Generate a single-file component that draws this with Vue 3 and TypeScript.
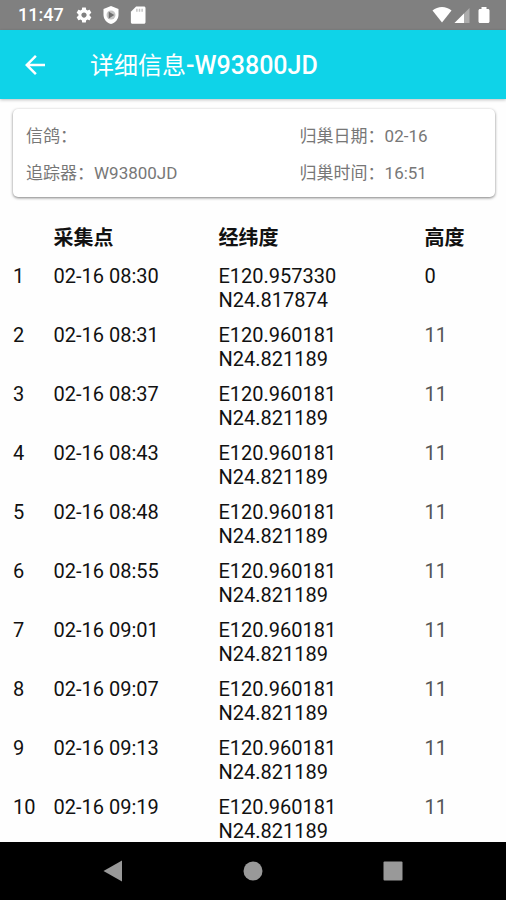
<script setup lang="ts">
interface TrackPoint {
  time: string
  east: string
  north: string
  altitude: number
}

const ringNo = 'W93800JD'

const times: string[] = ['08:31', '08:37', '08:43', '08:48', '08:55', '09:01', '09:07', '09:13', '09:19']

const points: TrackPoint[] = [
  { time: '02-16 08:30', east: 'E120.957330', north: 'N24.817874', altitude: 0 },
  ...times.map((t) => ({ time: `02-16 ${t}`, east: 'E120.960181', north: 'N24.821189', altitude: 11 })),
]
</script>

<template>
  <div class="screen">
    <div class="status">
      <span class="clock">11:47</span>
      <svg class="status-icon" viewBox="0 0 24 24" aria-hidden="true">
        <path fill-rule="evenodd" d="M19.43 12.98c.04-.32.07-.64.07-.98s-.03-.66-.07-.98l2.11-1.65c.19-.15.24-.42.12-.64l-2-3.46c-.12-.22-.39-.3-.61-.22l-2.49 1c-.52-.4-1.08-.73-1.69-.98l-.38-2.65C14.46 2.18 14.25 2 14 2h-4c-.25 0-.46.18-.49.42l-.38 2.65c-.61.25-1.17.59-1.69.98l-2.49-1c-.23-.09-.49 0-.61.22l-2 3.46c-.13.22-.07.49.12.64l2.11 1.65c-.04.32-.07.65-.07.98s.03.66.07.98l-2.11 1.65c-.19.15-.24.42-.12.64l2 3.46c.12.22.39.3.61.22l2.49-1c.52.4 1.08.73 1.69.98l.38 2.65c.03.24.24.42.49.42h4c.25 0 .46-.18.49-.42l.38-2.65c.61-.25 1.17-.59 1.69-.98l2.49 1c.23.09.49 0 .61-.22l2-3.46c.12-.22.07-.49-.12-.64l-2.11-1.65zM12 15.5c-1.93 0-3.5-1.57-3.5-3.5s1.57-3.5 3.5-3.5 3.5 1.57 3.5 3.5-1.57 3.5-3.5 3.5z" />
      </svg>
      <svg class="status-icon" viewBox="0 0 24 24" aria-hidden="true">
        <path d="M12 0 2 4v7.500C2 17.300 6.200 22.500 12 24c5.800-1.500 10-6.700 10-12.500V4z" />
        <circle class="disc" cx="12" cy="12" r="6" />
        <path class="play" d="M9 7.500v9l7.500-4.500z" />
      </svg>
      <svg class="status-icon" viewBox="0 0 24 24" aria-hidden="true">
        <path d="M20 .5H9.500l-7 7v14c0 1.100.9 2 2 2H20c1.100 0 2-.9 2-2v-19c0-1.100-.9-2-2-2z" />
        <path class="disc" d="M9.500 3.500h2v4h-2zM13 3.500h2v4h-2zM16.500 3.500h2v4h-2z" />
      </svg>
      <span class="spacer"></span>
      <svg class="signal-icon" viewBox="0 0 20 18" aria-hidden="true">
        <path d="M10 16.500.5 4.500C3.200 2.300 6.500 1 10 1s6.800 1.300 9.500 3.500z" />
      </svg>
      <svg class="cell-icon" viewBox="0 0 16 18" aria-hidden="true">
        <path d="M15.500 2v15H.5z" opacity=".35" />
        <path d="M10 7.500V17H.5z" />
      </svg>
      <svg class="battery-icon" viewBox="0 0 12 18" aria-hidden="true">
        <path d="M3.500 1h5v2H10c.8 0 1.500.7 1.500 1.500v11c0 .8-.7 1.500-1.500 1.500H2c-.8 0-1.500-.7-1.500-1.500v-11C.5 3.700 1.200 3 2 3h1.500z" />
      </svg>
    </div>

    <header class="app-bar">
      <button class="back" type="button" aria-label="返回">
        <svg viewBox="0 0 24 24" aria-hidden="true">
          <path d="M20 11H7.830l5.590-5.590L12 4l-8 8 8 8 1.410-1.410L7.830 13H20v-2z" />
        </svg>
      </button>
      <h1><span class="label">详细信息</span>-{{ ringNo }}</h1>
    </header>

    <main class="content">
      <section class="card">
        <span>信鸽：</span>
        <span>归巢日期：02-16</span>
        <span>追踪器：{{ ringNo }}</span>
        <span>归巢时间：16:51</span>
      </section>

      <table class="points">
        <thead>
          <tr>
            <th class="col-index"></th>
            <th class="col-time" scope="col">采集点</th>
            <th class="col-position" scope="col">经纬度</th>
            <th scope="col">高度</th>
          </tr>
        </thead>
        <tbody>
          <tr v-for="(p, i) in points" :key="p.time">
            <td class="col-index">{{ i + 1 }}</td>
            <td>{{ p.time }}</td>
            <td>{{ p.east }}<br />{{ p.north }}</td>
            <td :class="{ raised: p.altitude > 0 }">{{ p.altitude }}</td>
          </tr>
        </tbody>
      </table>
    </main>

    <nav class="nav-bar">
      <button type="button" aria-label="后退">
        <svg viewBox="0 0 24 24" aria-hidden="true"><path d="M21 1.500v21L2.500 12z" /></svg>
      </button>
      <button type="button" aria-label="主屏幕">
        <svg viewBox="0 0 24 24" aria-hidden="true"><circle cx="12" cy="12" r="9.500" /></svg>
      </button>
      <button type="button" aria-label="最近任务">
        <svg viewBox="0 0 24 24" aria-hidden="true"><rect x="2.500" y="2.500" width="19" height="19" rx="1" /></svg>
      </button>
    </nav>
  </div>
</template>

<style>
body {
  background: #fff;
}
</style>

<style scoped>
.screen {
  display: flex;
  flex-direction: column;
  height: 100vh;
  font-family: Roboto, "Noto Sans CJK SC", sans-serif;
  color: #111;
  background: #fefefe;
}

.status {
  display: flex;
  flex: none;
  align-items: center;
  height: 30px;
  padding: 0 16px 0 18px;
  background: #808080;
  color: #fff;
  fill: #fff;
}

.clock {
  margin-right: 11px;
  font-size: 18px;
  font-weight: 500;
  line-height: 30px;
}

.status-icon {
  width: 18px;
  height: 18px;
  margin-right: 9px;
}

.disc {
  fill: #c4c4c4;
}

.play {
  fill: #6e6e6e;
}

.spacer {
  flex: 1;
}

.signal-icon {
  width: 20px;
  height: 18px;
  margin-right: 2px;
}

.cell-icon {
  width: 16px;
  height: 18px;
  margin-right: 8px;
}

.battery-icon {
  width: 12px;
  height: 18px;
}

.app-bar {
  position: relative;
  display: flex;
  flex: none;
  align-items: center;
  gap: 40px;
  height: 69px;
  padding: 0 20px;
  background: #0fd3e8;
  box-shadow: 0 1px 3px rgba(0, 0, 0, 0.25);
}

.back {
  flex: none;
  width: 30px;
  height: 30px;
  padding: 0;
  border: 0;
  background: none;
  fill: #fff;
}

.back svg {
  display: block;
}

h1 {
  margin: 0;
  padding-top: 3px;
  color: #fff;
  font-size: 25px;
  font-weight: 500;
  line-height: 32px;
}

.label {
  font-size: 24px;
  font-weight: 400;
}

.content {
  flex: 1;
  min-height: 0;
  overflow-y: auto;
  scrollbar-width: none;
}

.card {
  display: grid;
  grid-template-columns: 60% 40%;
  row-gap: 12px;
  margin: 10px 11px 0 13px;
  padding: 15px 13px 11px;
  border-radius: 5px;
  background: #fff;
  box-shadow: 0 1px 3px rgba(0, 0, 0, 0.5);
  color: #777;
  font-size: 17px;
  line-height: 25px;
}

.points {
  width: 100%;
  margin-top: 24px;
  border-collapse: collapse;
  table-layout: fixed;
  font-size: 20px;
  line-height: 24px;
  text-align: left;
}

.points th,
.points td {
  padding: 0 0 11px;
  vertical-align: top;
}

.points th {
  padding: 5px 0 14px;
  font-weight: 700;
}

.points .col-index {
  width: 8%;
  padding-left: 13px;
}

.points .col-time {
  width: 165px;
}

.points .col-position {
  width: 206px;
}

.raised {
  color: #555;
}

.nav-bar {
  display: flex;
  flex: none;
  justify-content: center;
  align-items: center;
  gap: 116px;
  height: 58px;
  background: #000;
}

.nav-bar button {
  width: 24px;
  height: 24px;
  padding: 0;
  border: 0;
  background: none;
  fill: #999;
}

.nav-bar svg {
  display: block;
}
</style>
